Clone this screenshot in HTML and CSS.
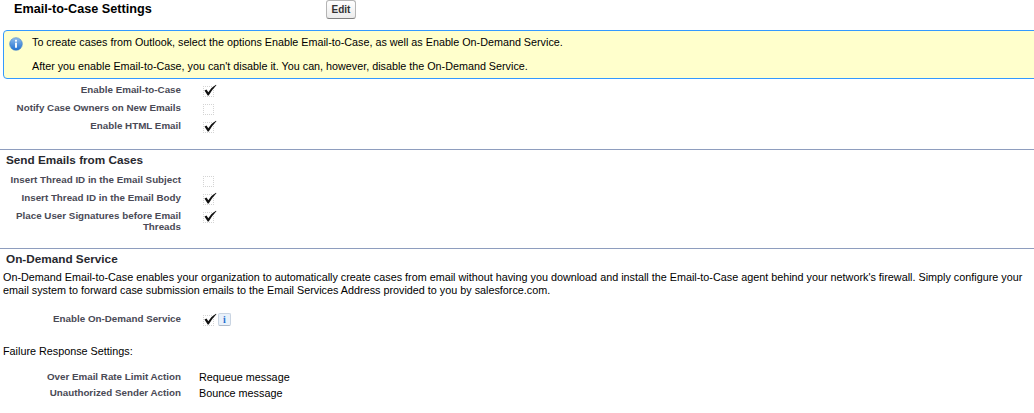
FILE: index.html
```html
<!DOCTYPE html>
<html lang="en">
<head>
<meta charset="utf-8">
<title>Email-to-Case Settings</title>
<link rel="stylesheet" href="styles.css">
</head>
<body>
<div class="titlebar">
  <h2 class="title">Email-to-Case Settings</h2>
  <button class="btn" type="button">Edit</button>
</div>
<div class="banner">
  <svg class="banner-icon" width="14" height="14" viewBox="0 0 15 15">
    <defs><linearGradient id="ig" x1="0" y1="0" x2="0" y2="1"><stop offset="0" stop-color="#8fbdec"/><stop offset="1" stop-color="#1f6fd0"/></linearGradient></defs>
    <circle cx="7.5" cy="7.5" r="6.8" fill="url(#ig)" stroke="#3f7fc8" stroke-width=".6"/>
    <rect x="6.5" y="3" width="2" height="2" fill="#fff"/>
    <rect x="6.5" y="6" width="2" height="5.5" fill="#fff"/>
  </svg>
  <div class="banner-text">
    <p class="banner-line">To create cases from Outlook, select the options Enable Email-to-Case, as well as Enable On-Demand Service.</p>
    <p class="banner-line">After you enable Email-to-Case, you can't disable it. You can, however, disable the On-Demand Service.</p>
  </div>
</div>
<div class="rows rows-first">
  <div class="row"><div class="label">Enable Email-to-Case</div><div class="value"><span class="cb checked"><svg class="tick" width="14" height="12" viewBox="0 0 14 12"><path d="M1.5 6.6 L3.5 5.6 L5.3 8.2 Q8 3.5 13 .8 L13.4 1.2 Q9 5.5 5.7 11.6 L4.7 11.6 Z" fill="#111"/></svg></span></div></div>
  <div class="row"><div class="label">Notify Case Owners on New Emails</div><div class="value"><span class="cb"></span></div></div>
  <div class="row"><div class="label">Enable HTML Email</div><div class="value"><span class="cb checked"><svg class="tick" width="14" height="12" viewBox="0 0 14 12"><path d="M1.5 6.6 L3.5 5.6 L5.3 8.2 Q8 3.5 13 .8 L13.4 1.2 Q9 5.5 5.7 11.6 L4.7 11.6 Z" fill="#111"/></svg></span></div></div>
</div>
<h3 class="section section-send">Send Emails from Cases</h3>
<div class="rows">
  <div class="row"><div class="label">Insert Thread ID in the Email Subject</div><div class="value"><span class="cb"></span></div></div>
  <div class="row"><div class="label">Insert Thread ID in the Email Body</div><div class="value"><span class="cb checked"><svg class="tick" width="14" height="12" viewBox="0 0 14 12"><path d="M1.5 6.6 L3.5 5.6 L5.3 8.2 Q8 3.5 13 .8 L13.4 1.2 Q9 5.5 5.7 11.6 L4.7 11.6 Z" fill="#111"/></svg></span></div></div>
  <div class="row"><div class="label">Place User Signatures before Email Threads</div><div class="value"><span class="cb checked"><svg class="tick" width="14" height="12" viewBox="0 0 14 12"><path d="M1.5 6.6 L3.5 5.6 L5.3 8.2 Q8 3.5 13 .8 L13.4 1.2 Q9 5.5 5.7 11.6 L4.7 11.6 Z" fill="#111"/></svg></span></div></div>
</div>
<h3 class="section section-demand">On-Demand Service</h3>
<p class="desc">On-Demand Email-to-Case enables your organization to automatically create cases from email without having you download and install the Email-to-Case agent behind your network's firewall. Simply configure your email system to forward case submission emails to the Email Services Address provided to you by salesforce.com.</p>
<div class="rows rows-demand">
  <div class="row"><div class="label">Enable On-Demand Service</div><div class="value"><span class="cb checked"><svg class="tick" width="14" height="12" viewBox="0 0 14 12"><path d="M1.5 6.6 L3.5 5.6 L5.3 8.2 Q8 3.5 13 .8 L13.4 1.2 Q9 5.5 5.7 11.6 L4.7 11.6 Z" fill="#111"/></svg></span><span class="info">i</span></div></div>
</div>
<p class="subhead">Failure Response Settings:</p>
<div class="rows rows-failure">
  <div class="row row-tight"><div class="label">Over Email Rate Limit Action</div><div class="value text">Requeue message</div></div>
  <div class="row row-tight"><div class="label">Unauthorized Sender Action</div><div class="value text">Bounce message</div></div>
</div>
</body>
</html>
```
FILE: styles.css
```css
html, body {
  margin: 0;
  padding: 0;
  background: #fff;
  overflow: hidden;
}
body {
  width: 1034px;
  height: 413px;
  font-family: "Liberation Sans", Arial, sans-serif;
  font-size: 10.8px;
  color: #000;
}
.titlebar {
  display: flex;
  align-items: flex-start;
  height: 30px;
  padding-left: 14px;
}
.title {
  margin: 1px 0 0;
  width: 312px;
  font-size: 12.65px;
  line-height: 17px;
  font-weight: bold;
  color: #000;
}
.btn {
  width: 30px;
  height: 19px;
  padding: 0;
  border: 1px solid #b5b5b5;
  border-bottom-color: #7f7f7f;
  border-radius: 3px;
  background: linear-gradient(#fff, #ececec);
  font-family: inherit;
  font-size: 10px;
  font-weight: bold;
  color: #333;
}
.banner {
  display: flex;
  gap: 9px;
  margin-left: 3px;
  width: 1040px;
  height: 49px;
  box-sizing: border-box;
  padding: 5px 0 0 5px;
  border: 1px solid #39f;
  border-radius: 4px;
  background: #ffc;
}
.banner-icon { flex: none; margin-top: 1px; }
.banner-line {
  margin: 0 0 11px;
  line-height: 13px;
  font-size: 10.77px;
}
.rows { display: flex; flex-direction: column; }
.rows-first { margin-top: 1px; }
.row { display: flex; min-height: 18px; }
.row-tight { min-height: 16px; }
.label {
  box-sizing: border-box;
  width: 181px;
  padding-top: 4px;
  text-align: right;
  font-size: 9.8px;
  line-height: 11px;
  font-weight: bold;
  color: #4a4a56;
}
.row-tight .label { padding-top: 3px; }
.value {
  display: flex;
  align-items: flex-start;
  padding: 6px 0 0 22px;
}
.value.text {
  padding: 3px 0 0 18px;
  font-size: 10.8px;
  line-height: 13px;
}
.cb {
  position: relative;
  display: block;
  box-sizing: border-box;
  width: 11px;
  height: 11px;
  border: 1px dotted #d4d4d4;
}
.tick { position: absolute; left: -1px; top: -3px; }
.info {
  box-sizing: border-box;
  width: 13px;
  height: 13px;
  margin-left: 4px;
  margin-top: -2px;
  border: 1px solid #c9d4e2;
  border-bottom-color: #aeb9c8;
  border-radius: 2px;
  background: #e9f1fa;
  font-family: "Liberation Serif", serif;
  font-weight: bold;
  font-size: 10px;
  line-height: 11px;
  text-align: center;
  color: #1f6fd0;
}
.section {
  box-sizing: border-box;
  padding: 3px 0 0 6px;
  border-top: 1px solid #8e9dbe;
  font-size: 11.75px;
  line-height: 14px;
  font-weight: bold;
  color: #27282e;
}
.section-send {
  margin: 15px 0 0;
  height: 21px;
}
.section-demand {
  margin: 16px 0 0;
  height: 23px;
}
.desc {
  margin: 0 0 0 3px;
  font-size: 10.8px;
  line-height: 13px;
}
.rows-demand { margin-top: 12px; }
.subhead {
  margin: 18px 0 0 3px;
  font-size: 10.8px;
  line-height: 13px;
}
.rows-failure { margin-top: 10px; }
```
